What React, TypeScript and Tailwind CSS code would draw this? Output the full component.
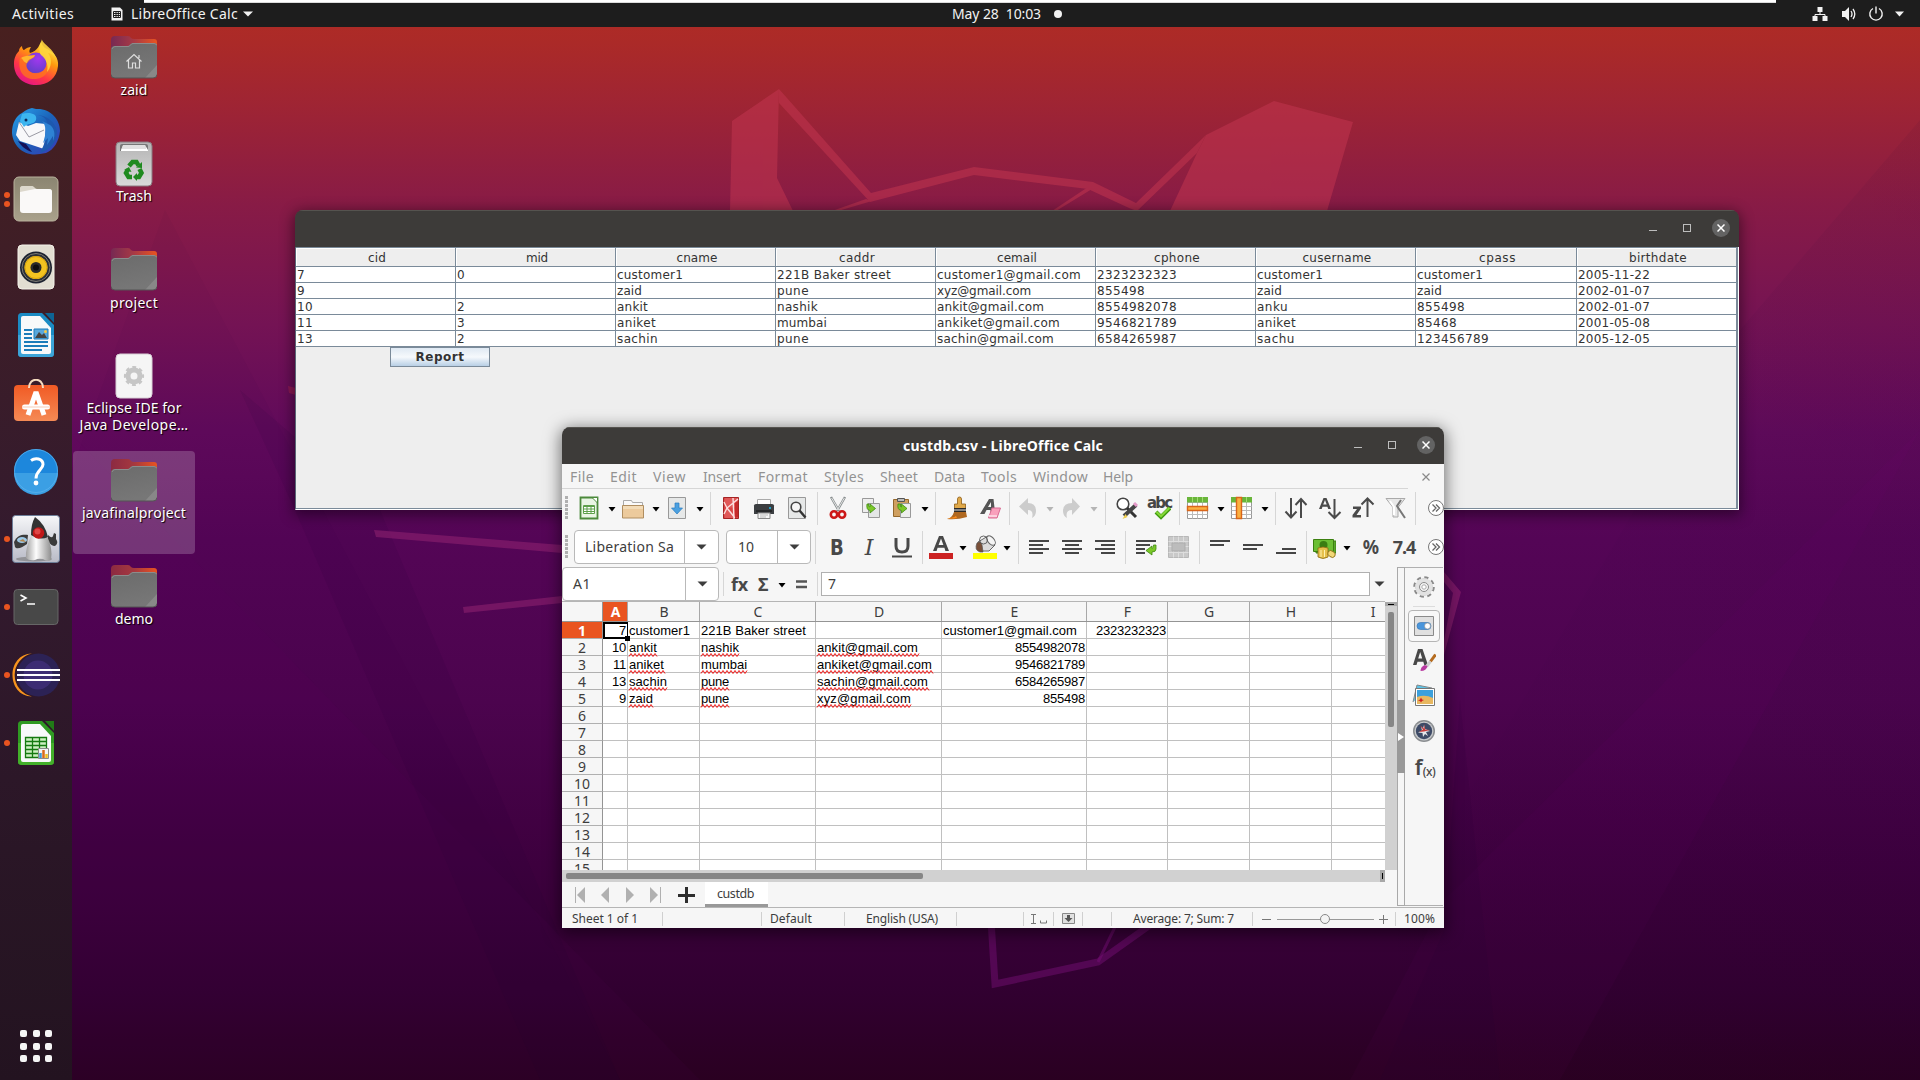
import { useLayoutEffect, useRef, useState } from "react";
import type { ReactNode } from "react";

/* Spreads a label over a fixed measure by adjusting its tracking. */
function Fit({ w, children, className = "" }: { w: number; children: string; className?: string }) {
  const ref = useRef<HTMLSpanElement>(null);
  const [ls, setLs] = useState(0);
  useLayoutEffect(() => {
    const el = ref.current;
    if (!el) return;
    el.style.letterSpacing = "0px";
    const natural = el.getBoundingClientRect().width;
    const next = (w - natural) / children.length;
    el.style.letterSpacing = `${next}px`;
    setLs(next);
  }, [w, children]);
  return (
    <span ref={ref} className={`inline-block shrink-0 whitespace-pre ${className}`} style={{ letterSpacing: `${ls}px` }}>
      {children}
    </span>
  );
}

const UI = "font-['Noto_Sans',sans-serif]";

/* ---------- Wallpaper ---------- */
function Wallpaper() {
  return (
    <svg className="absolute inset-0 h-[1080px] w-[1920px]" viewBox="0 0 1920 1080">
      <defs>
        <linearGradient id="sky" x1="0" y1="0" x2="0" y2="1">
          <stop offset="0" stopColor="#b12c24" />
          <stop offset="0.04" stopColor="#ab2a28" />
          <stop offset="0.1" stopColor="#9e2434" />
          <stop offset="0.19" stopColor="#881b46" />
          <stop offset="0.3" stopColor="#741354" />
          <stop offset="0.4" stopColor="#600a5b" />
          <stop offset="0.5" stopColor="#540556" />
          <stop offset="0.65" stopColor="#4c044e" />
          <stop offset="0.8" stopColor="#3d003e" />
          <stop offset="0.92" stopColor="#310030" />
          <stop offset="1" stopColor="#2a0021" />
        </linearGradient>
        <linearGradient id="fadeDark" x1="0" y1="0" x2="1" y2="0">
          <stop offset="0" stopColor="#1a0030" stopOpacity="0" />
          <stop offset="1" stopColor="#1a0030" stopOpacity="0.06" />
        </linearGradient>
      </defs>
      <rect width="1920" height="1080" fill="url(#sky)" />
      <path d="M72 435 L700 1080 L72 1080Z" fill="#700070" opacity="0.05" />
      <path d="M165 210 L560 960 L620 1080 L72 1080 L72 470Z" fill="#1a0030" opacity="0.03" />
      <path d="M240 390 L295 510 L540 1080 L620 1080 L380 510Z" fill="#1a0030" opacity="0.08" />
      <path d="M1920 120 L1740 330 L1300 1080 L1920 1080Z" fill="url(#fadeDark)" />
      <path d="M1920 430 L1444 900 L1350 1080 L1560 1080Z" fill="#a000a0" opacity="0.04" />
      <path d="M1460 700 L1444 930 L1380 1080 L1500 1080Z" fill="#1a0030" opacity="0.1" />
      <g fill="#c43650" opacity="0.52">
        <path d="M732 121 L779 89 L777 178 L793 211 L730 211Z" />
        <path d="M1206 135 L1274 101 L1353 122 L1327 211 L1170 211 L1197 153Z" />
        <path d="M779 89 L871 193 L974 167 L1093 182 L1136 203 L1206 135 L1197 153 L1137 211 L1129 208 L1088 189 L974 175 L870 202 L779 103Z" />
        <path d="M866 199 L832 211 L838 211 L872 201Z M1088 187 L1052 211 L1056 211 L1092 189Z" />
      </g>
      <path d="M288 386 l8 2 v7 l-7 -2z" fill="#a02050" opacity="0.6" />
      <g fill="#a02a78" opacity="0.45">
        <path d="M374 530 L562 545 L562 553 L376 537Z" />
        <path d="M463 607 L562 596 L562 603 L464 613Z" />
        <path d="M1444 572 L1461 592 L1444 655 L1444 640 L1453 593 L1444 582Z" />
      </g>
      <path d="M991 920 L995 984 L1098 962 L1160 918" fill="none" stroke="#7a0f7a" strokeWidth="7" opacity="0.45" />
      <path d="M1098 962 L1116 925" fill="none" stroke="#7a0f7a" strokeWidth="3" opacity="0.45" />
    </svg>
  );
}

/* ---------- Top bar ---------- */
function TopBar() {
  return (
    <header className={`relative flex h-[27px] w-full items-center bg-[#1d1d1d] text-[14px] leading-none text-[#f2f2f2] ${UI}`}>
      <div className="absolute top-0 left-[144px] h-[3px] w-[1632px] border-b border-[#dcdcdc] bg-white" />
      <Fit w={62} className="ml-3">Activities</Fit>
      <svg className="ml-[37px] h-[14px] w-[12px]" viewBox="0 0 12 14">
        <path d="M0.5 0.5h8.5l2.5 2.5v10.5h-11z" fill="#f2f2f2" />
        <path d="M2.5 4.5h7v6h-7zM2.5 6.5h7M2.5 8.5h7M5 4.5v6M7.3 4.5v6" fill="none" stroke="#1d1d1d" />
      </svg>
      <Fit w={107} className="ml-2">LibreOffice Calc</Fit>
      <svg className="ml-[5px] h-[6px] w-[10px]" viewBox="0 0 10 6"><path d="M0 0.5h10L5 5.5z" fill="#f2f2f2" /></svg>
      <Fit w={89} className="ml-[699px]">May 28  10:03</Fit>
      <span className="ml-[13px] h-2 w-2 rounded-full bg-[#f2f2f2]" />
      <svg className="ml-[750px] h-4 w-4" viewBox="0 0 16 16" fill="#f2f2f2">
        <path d="M5.5 1h5v5h-5zM0.500 10h5v5h-5zM10.500 10h5v5h-5z" />
        <path d="M8 5v4M3 11V8.500h10V11" fill="none" stroke="#f2f2f2" />
      </svg>
      <svg className="ml-[13px] h-4 w-4" viewBox="0 0 16 16" fill="#f2f2f2">
        <path d="M1 5h3l4-4v14l-4-4H1z" />
        <path d="M10 5q2 3 0 6M12 3q3.600 5 0 10" fill="none" stroke="#f2f2f2" strokeWidth="1.300" />
      </svg>
      <svg className="ml-[11px] h-4 w-4" viewBox="0 0 16 16" fill="none" stroke="#f2f2f2" strokeWidth="1.400">
        <path d="M5 2.500a6.200 6.200 0 1 0 6 0M8 0.500v7" />
      </svg>
      <svg className="ml-[11px] h-[6px] w-[9px]" viewBox="0 0 9 6"><path d="M0 0.500h9L4.500 5.500z" fill="#f2f2f2" /></svg>
    </header>
  );
}

/* ---------- Dock ---------- */
const Firefox = () => (
  <svg className="h-12 w-12" viewBox="0 0 48 48">
    <defs>
      <linearGradient id="ffb" x1="0.8" y1="0.1" x2="0.3" y2="1">
        <stop offset="0" stopColor="#fff44f" /><stop offset="0.35" stopColor="#ff980e" /><stop offset="0.7" stopColor="#ff3647" /><stop offset="1" stopColor="#e31587" />
      </linearGradient>
      <radialGradient id="ffg" cx="0.6" cy="0.3" r="0.8"><stop offset="0" stopColor="#a238ef" /><stop offset="1" stopColor="#5b3fc4" /></radialGradient>
    </defs>
    <path d="M30 0c-1 4 0 6 3 9 9 4 14 10 13 18C45 39 36 46 24 46S2 38 2 25c0-6 2-10 5-13 0-2 1-4 3-5 0 2 1 4 2 4 2-2 5-3 7-3-2 3-2 5-1 6 8-2 10-9 12-14z" fill="url(#ffb)" />
    <circle cx="24" cy="24" r="10.500" fill="url(#ffg)" />
    <path d="M8 19c5-2 10-2 15-3 0 3-3 3-6 6-5 4-2 12 6 12 9 0 13-6 12-13 4 8 0 18-11 19C12 41 5 32 8 19z" fill="#ff7a18" opacity="0.7" />
    <path d="M30 1c2 5 11 8 14 18-2-3-5-5-8-5 5 6 3 15-1 19 2-8-2-14-6-17-3-4-1-9 1-15z" fill="#ffd53d" opacity="0.9" />
    <path d="M9 19c4-3 10-2 14-3-1 4-7 3-8 8-3 0-4-4-6-5z" fill="#ffb52e" />
  </svg>
);
const Thunderbird = () => (
  <svg className="h-12 w-12" viewBox="0 0 48 48">
    <defs><linearGradient id="tb" x1="0" y1="0" x2="1" y2="1"><stop offset="0" stopColor="#2aa4ee" /><stop offset="0.5" stopColor="#1b62b8" /><stop offset="1" stopColor="#3a3ab8" /></linearGradient></defs>
    <path d="M20 1l4 1c14-1 24 10 24 22-1 10-6 19-14 22l-6 1C12 50 1 39 0 26 0 16 4 9 10 6c3-2 5-4 10-5z" fill="url(#tb)" />
    <path d="M6 34c3 5 8 9 14 11L14 37z" fill="#151057" />
    <path d="M4 28L7 15l9 4 8-3 10 1-2 25L8 34z" fill="#f8f8fa" />
    <path d="M7 15l10 15L32 23" fill="none" stroke="#9a9aa4" strokeWidth="1" />
    <path d="M10 7c6-2 16-1 14 6-2 5-9 3-12 7l-4-6z" fill="#3cb5ef" />
    <path d="M24 8c8 0 12 5 12 13-1 9-3 15-8 25 12-4 17-12 17-22-2-9-10-16-21-16z" fill="#1d58ae" />
    <path d="M30 14c5 5 4 14 1 22l5-5-1 7 6-9 0 5c3-7 1-13-3-16z" fill="#2e82d4" />
    <circle cx="14" cy="13" r="1.500" fill="#0c2a5c" />
  </svg>
);
const Files = () => (
  <svg className="h-12 w-12" viewBox="0 0 48 48">
    <defs><linearGradient id="fl" x1="0" y1="0" x2="0" y2="1"><stop offset="0" stopColor="#8b8571" /><stop offset="1" stopColor="#a9a18b" /></linearGradient></defs>
    <rect x="2" y="2" width="44" height="44" rx="5" fill="url(#fl)" stroke="#b9b29d" />
    <path d="M8 14c0-2 1-3 3-3h9c2 0 3 3 5 3h12c2 0 3 1 3 3v18H8z" fill="#dcd8cc" />
    <rect x="8" y="14" width="32" height="24" rx="3" fill="#faf9f8" />
    <path d="M8 17v-3c0-2 1-3 3-3h8c2 0 3 1.500 4 3z" fill="#dcd8cc" />
  </svg>
);
const Rhythmbox = () => (
  <svg className="h-12 w-12" viewBox="0 0 48 48">
    <rect x="6" y="2" width="36" height="44" rx="4" fill="#e2ded2" stroke="#f4f2ea" />
    <circle cx="24" cy="24.500" r="16" fill="#1c2230" /><circle cx="24" cy="24.500" r="14" fill="#2c3038" stroke="#7d7b74" />
    <circle cx="24" cy="24.500" r="11.500" fill="#f3c321" /><circle cx="24" cy="24.500" r="11" fill="none" stroke="#d9a40e" /><circle cx="24" cy="24.500" r="5.500" fill="#2b2b2b" />
    <circle cx="24" cy="24.500" r="3" fill="#0f0f0f" />
  </svg>
);
const Writer = () => (
  <svg className="h-12 w-12" viewBox="0 0 48 48">
    <path d="M10 2h20l12 12v28c0 3-1 4-4 4H10c-3 0-4-1-4-4V6c0-3 1-4 4-4z" fill="#1b8bc4" />
    <path d="M6 24h36v18c0 3-1 4-4 4H10c-3 0-4-1-4-4z" fill="#3ca4d8" />
    <path d="M33 2h9v10z" fill="#0e6495" />
    <path d="M11 5h17l11 12v24q0 2-2 2H11q-2 0-2-2V7q0-2 2-2z" fill="#f8f9fa" />
    <path d="M12 19h8M12 23h8M12 27h8M12 31h24M12 35h24M12 39h18" stroke="#1b7cba" strokeWidth="2" />
    <path d="M22 18h14v10H22z" fill="#5aa8dc" /><path d="M23 27l4-6 3 3 2-2 3 5z" fill="#444" /><circle cx="33.500" cy="20.500" r="1.500" fill="#f7c948" /><path d="M22 18h14v10H22z" fill="none" stroke="#1b7cba" />
  </svg>
);
const Software = () => (
  <svg className="h-12 w-12" viewBox="0 0 48 48">
    <defs><linearGradient id="sw" x1="0" y1="0" x2="0" y2="1"><stop offset="0" stopColor="#f15a24" /><stop offset="1" stopColor="#f58a55" /></linearGradient></defs>
    <rect x="2" y="6" width="44" height="36" rx="4" fill="url(#sw)" />
    <path d="M17 9c0-11 14-11 14 0" fill="none" stroke="#f6dcc0" strokeWidth="2" />
    <path d="M16 36l8-23 8 23" fill="none" stroke="#fff" strokeWidth="5" strokeLinejoin="bevel" />
    <rect x="10" y="25.500" width="28" height="5" rx="2.500" fill="#fff" /><path d="M10 28h28" stroke="#f4b899" strokeWidth="0.700" />
  </svg>
);
const Help = () => (
  <svg className="h-12 w-12" viewBox="0 0 48 48">
    <circle cx="24" cy="24" r="22" fill="#1d87dc" /><path d="M2 26a22 22 0 0 0 44 0z" fill="#3b9fe4" />
    <circle cx="24" cy="24" r="21.500" fill="none" stroke="#5fb4ee" strokeWidth="0.700" />
    <path d="M19 13.500c4-3 12-2.500 12 4 0 5-7 6-7 14" fill="none" stroke="#fff" strokeWidth="3" /><circle cx="24" cy="36" r="2.400" fill="#fff" />
  </svg>
);
const Duke = () => (
  <svg className="h-12 w-12" viewBox="0 0 48 48">
    <defs>
      <linearGradient id="dk" x1="0" y1="0" x2="0" y2="1"><stop offset="0" stopColor="#f6f7f9" /><stop offset="1" stopColor="#b8bac6" /></linearGradient>
      <linearGradient id="dkb" x1="0" y1="0" x2="1" y2="0"><stop offset="0" stopColor="#a0a0a0" /><stop offset="0.4" stopColor="#fdfdfd" /><stop offset="1" stopColor="#8d8d8d" /></linearGradient>
    </defs>
    <rect x="0.500" y="0.500" width="47" height="47" rx="3" fill="url(#dk)" stroke="#6d7f9a" />
    <ellipse cx="22" cy="44" rx="18" ry="2.500" fill="#777" opacity="0.6" />
    <path d="M2 27c3-7 9-8 14-7l-1 9c-4 3-10 6-12 3z" fill="#3c3c3c" /><ellipse cx="10" cy="25" rx="5" ry="3" fill="#9cc8e6" /><path d="M7 26l4-2 3 3z" fill="#b5884f" />
    <path d="M36 20q4 4 5 1l1-3 2 1v5q3 4-1 7-4 0-7-5z" fill="#3a3a3a" />
    <path d="M20 19q7 6 15 2 6 12 4 24-4 2-8-1-5-1-8 1-6 1-9-2-1-10 6-24z" fill="url(#dkb)" />
    <path d="M23 2q10 7 13 20-8 4-17-2 0-11 4-18z" fill="#333" />
    <circle cx="26.500" cy="18" r="5.800" fill="#c01818" /><circle cx="25.500" cy="16.500" r="3" fill="#ee5a5a" opacity="0.7" />
  </svg>
);
const Terminal = () => (
  <svg className="h-12 w-12" viewBox="0 0 48 48">
    <rect x="2" y="6.500" width="44" height="35" rx="3.500" fill="#484848" stroke="#666" />
    <path d="M8.500 12l5.500 3-5.500 3" fill="none" stroke="#fff" strokeWidth="1.600" /><path d="M15 21h8" stroke="#fff" strokeWidth="1.500" />
  </svg>
);
const Eclipse = () => (
  <svg className="h-12 w-12" viewBox="0 0 48 48">
    <path d="M20 2.500A22 22 0 0 0 20 45.500C-6 45-6 3 20 2.500z" fill="#f7941e" />
    <circle cx="26.500" cy="24" r="21.500" fill="#2c2255" /><circle cx="26" cy="24" r="14.500" fill="#41307b" opacity="0.8" />
    <path d="M5 19h43M5 24h43M5 29h43" stroke="#fff" strokeWidth="2.200" />
  </svg>
);
const CalcIcon = () => (
  <svg className="h-12 w-12" viewBox="0 0 48 48">
    <path d="M10 2h20l12 12v28c0 3-1 4-4 4H10c-3 0-4-1-4-4V6c0-3 1-4 4-4z" fill="#2f9a22" />
    <path d="M6 24h36v18c0 3-1 4-4 4H10c-3 0-4-1-4-4z" fill="#43b02a" />
    <path d="M33 2h9v10z" fill="#217a17" />
    <path d="M11 5h17l11 12v24q0 2-2 2H11q-2 0-2-2V7q0-2 2-2z" fill="#f8f9fa" />
    <path d="M13.500 18.500h21v20h-21z" fill="#ccf0c0" />
    <path d="M13.500 18.500h21v20h-21zM13.500 22.500h21M13.500 26.500h21M13.500 30.500h21M13.500 34.500h21M20.500 18.500v20M27.500 18.500v20" fill="none" stroke="#157a10" strokeWidth="1.300" />
    <path d="M26.500 29.500h10v10h-10z" fill="#f5f5f5" stroke="#8a8a8a" /><path d="M28.500 39v-5" stroke="#3a9ad4" strokeWidth="2.500" /><path d="M31.500 39v-8" stroke="#d9691c" strokeWidth="2.500" /><path d="M34.500 39v-4" stroke="#f0c020" strokeWidth="2.500" />
  </svg>
);

function Dock() {
  const apps: { icon: ReactNode; dots: number }[] = [
    { icon: <Firefox />, dots: 0 }, { icon: <Thunderbird />, dots: 0 }, { icon: <Files />, dots: 2 }, { icon: <Rhythmbox />, dots: 0 },
    { icon: <Writer />, dots: 0 }, { icon: <Software />, dots: 0 }, { icon: <Help />, dots: 0 }, { icon: <Duke />, dots: 1 },
    { icon: <Terminal />, dots: 1 }, { icon: <Eclipse />, dots: 1 }, { icon: <CalcIcon />, dots: 1 },
  ];
  return (
    <nav className="flex w-[72px] shrink-0 flex-col bg-gradient-to-b from-[#48201f] via-[#331a2e] to-[#231320] pt-[2px]">
      {apps.map((a, i) => (
        <div key={i} className="flex h-[68px] items-center">
          <div className="flex w-3 flex-col items-end gap-[3px] pr-[2px]">
            {Array.from({ length: a.dots }).map((_, d) => <span key={d} className="h-[6px] w-[6px] rounded-full bg-[#e95420]" />)}
          </div>
          {a.icon}
        </div>
      ))}
      <div className="mt-auto mb-[18px] ml-5 grid w-8 grid-cols-3 gap-[5.500px]">
        {Array.from({ length: 9 }).map((_, i) => <span key={i} className="h-[7px] w-[7px] rounded-[2px] bg-[#f5f5f5]" />)}
      </div>
    </nav>
  );
}

/* ---------- Desktop icons ---------- */
const Folder = ({ home = false, warm = false }: { home?: boolean; warm?: boolean }) => (
  <svg className="h-[44px] w-[46px]" viewBox="0 0 46 44">
    <defs>
      <linearGradient id="fb1" x1="0" y1="0" x2="1" y2="0"><stop offset="0" stopColor="#772953" /><stop offset="0.5" stopColor="#a83a45" /><stop offset="1" stopColor="#e95420" /></linearGradient>
      <linearGradient id="fb2" x1="0" y1="0" x2="1" y2="0"><stop offset="0" stopColor="#8c2a42" /><stop offset="0.5" stopColor="#a5383f" /><stop offset="1" stopColor="#e95420" /></linearGradient>
      <linearGradient id="ff" x1="0" y1="0" x2="0.300" y2="1"><stop offset="0" stopColor="#6b6b6b" /><stop offset="1" stopColor="#777" /></linearGradient>
    </defs>
    <path d="M0 4q0-4 4-4h13q2 0 3 2 1 1 3 1h20q3 0 3 3v16H0z" fill={warm ? "url(#fb2)" : "url(#fb1)"} />
    <path d="M0 14q0-4 4-4h13q1 0 2-1.500T22 7h21q3 0 3 3v28q0 4-4 4H4q-4 0-4-4z" fill="url(#ff)" />
    <path d="M1 13q1-2.500 3-2.500h13q1.500 0 2.500-1.500T22 7.500h21q2 0 3 2" fill="none" stroke="#999" strokeWidth="0.700" />
    <path d="M46 29v9q0 4-4 4h-8z" fill="#888" /><path d="M0 38.500q0 3.500 4 3.500h38q4 0 4-3.500" fill="none" stroke="#555" />
    {home && <path d="M15.500 25.500l7.500-7 7.500 7M17.500 24v8h4v-5h3v5h4v-8M28 22v-3" fill="none" stroke="#dedede" strokeWidth="1.200" />}
  </svg>
);
const Trash = () => (
  <svg className="h-[46px] w-[38px]" viewBox="0 0 38 46">
    <defs><linearGradient id="tr" x1="0" y1="0" x2="0" y2="1"><stop offset="0" stopColor="#b4b4b4" /><stop offset="1" stopColor="#dadada" /></linearGradient></defs>
    <rect x="1" y="1" width="36" height="44" rx="4" fill="url(#tr)" stroke="#8a7a80" />
    <path d="M5 10V5q0-2 2-2h24q2 0 2 2v5z" fill="#777" /><path d="M6 9l2-5h22l3 5v1H6z" fill="#fff" /><path d="M8 5h23M7 7h24" stroke="#aaa" strokeWidth="0.700" />
    <g fill="none" stroke="#1f8a1f" strokeWidth="4.500"><path d="M14 25l3.500-4h4l2 3.500M24.500 28l2 4-2.500 4h-3.500M17 36h-3.500l-2.500-4 2-3.500" /></g>
    <path d="M21 26.500l6 0.500v-6zM22 32v8l-4-4zM9 29l5-3 2.500 5z" fill="#1f8a1f" />
  </svg>
);
const Launcher = () => (
  <svg className="h-[46px] w-[38px]" viewBox="0 0 38 46">
    <rect x="1" y="1" width="36" height="44" rx="4" fill="#f5f5f5" stroke="#d8d0d6" />
    <circle cx="19" cy="23" r="6" fill="none" stroke="#c6c6c6" strokeWidth="5" />
    <circle cx="19" cy="23" r="8.600" fill="none" stroke="#c6c6c6" strokeWidth="3" strokeDasharray="3.700 3.050" strokeDashoffset="1.850" />
  </svg>
);

function DesktopIcons() {
  const items: { icon: ReactNode; lines: [string, number][]; sel?: boolean; pad: string; box: string }[] = [
    { icon: <Folder home />, lines: [["zaid", 27]], pad: "pt-[8px]", box: "h-[45px]" },
    { icon: <Trash />, lines: [["Trash", 36]], pad: "pt-[7px]", box: "h-[46px]" },
    { icon: <Folder />, lines: [["project", 48]], pad: "pt-[8px]", box: "h-[46px]" },
    { icon: <Launcher />, lines: [["Eclipse IDE for", 95], ["Java Develope…", 109]], pad: "pt-[8px]", box: "h-[46px]" },
    { icon: <Folder warm />, lines: [["javafinalproject", 104]], sel: true, pad: "pt-[8px]", box: "h-[45px]" },
    { icon: <Folder warm />, lines: [["demo", 38]], pad: "pt-[8px]", box: "h-[45px]" },
  ];
  return (
    <div className={`flex flex-col gap-[2.750px] pt-[1px] pl-px text-[14px] leading-[17px] text-white ${UI}`}>
      {items.map((it, i) => (
        <div key={i} className={`flex h-[103px] w-[122px] flex-col items-center rounded-[4px] ${it.pad} ${it.sel ? "bg-white/20" : ""}`}>
          <div className={`flex items-start ${it.box}`}>{it.icon}</div>
          {it.lines.map(([t, w]) => (
            <Fit key={t} w={w} className="[text-shadow:1px_1px_1px_#000]">{t}</Fit>
          ))}
        </div>
      ))}
    </div>
  );
}

/* ---------- Window chrome ---------- */
function WindowButtons() {
  return (
    <div className="mb-[2px] flex items-center text-[#c8c8c8]">
      <span className="mt-[5px] h-px w-2 bg-[#bdbdbd]" />
      <span className="ml-[26px] h-2 w-2 border border-[#bdbdbd]" />
      <span className="ml-[21px] flex h-[18px] w-[18px] items-center justify-center rounded-full bg-[#636363]">
        <svg className="h-2 w-2" viewBox="0 0 8 8"><path d="M0.500 0.500l7 7M7.500 0.500l-7 7" stroke="#fff" strokeWidth="1.500" /></svg>
      </span>
    </div>
  );
}

/* ---------- Customer table window ---------- */
const HEADS: [string, number][] = [["cid", 18], ["mid", 22], ["cname", 41], ["caddr", 36], ["cemail", 40], ["cphone", 46], ["cusername", 69], ["cpass", 37], ["birthdate", 58]];
const ROWS: [string, number][][] = [
  [["7", 8], ["0", 8], ["customer1", 66], ["221B Baker street", 114], ["customer1@gmail.com", 144], ["2323232323", 80], ["customer1", 66], ["customer1", 66], ["2005-11-22", 72]],
  [["9", 8], ["", 0], ["zaid", 25], ["pune", 32], ["xyz@gmail.com", 94], ["855498", 48], ["zaid", 25], ["zaid", 25], ["2002-01-07", 72]],
  [["10", 16], ["2", 8], ["ankit", 31], ["nashik", 41], ["ankit@gmail.com", 107], ["8554982078", 80], ["anku", 31], ["855498", 48], ["2002-01-07", 72]],
  [["11", 16], ["3", 8], ["aniket", 39], ["mumbai", 50], ["ankiket@gmail.com", 123], ["9546821789", 80], ["aniket", 39], ["85468", 40], ["2001-05-08", 72]],
  [["13", 16], ["2", 8], ["sachin", 41], ["pune", 32], ["sachin@gmail.com", 117], ["6584265987", 80], ["sachu", 38], ["123456789", 72], ["2005-12-05", 72]],
];

function TableWindow() {
  return (
    <section className="absolute top-[210px] left-[295px] flex h-[300px] w-[1444px] flex-col overflow-hidden rounded-t-[8px] font-['DejaVu_Sans',sans-serif] text-[12px] leading-none text-[#333] shadow-[0_3px_14px_2px_rgba(0,0,0,0.45)]">
      <div className="flex h-[37px] shrink-0 items-center justify-end border-t border-[#55534f] bg-[#3d3b39] pr-[9px]"><WindowButtons /></div>
      <div className="flex-1 border-r border-b border-l border-r-white border-b-white border-l-[#5a6675] bg-white">
        <div className="h-full w-[1442px] border-r-2 border-b border-[#7a8a99] bg-[#eee]">
          <div className="grid grid-cols-[repeat(7,160px)_161px_160px]">
            {HEADS.map(([h, w]) => (
              <div key={h} className="flex h-5 items-center justify-center border-t border-r border-b border-[#7a8a99] bg-[#eee] pt-[2px] pl-[3px] shadow-[inset_1px_1px_0_#fff]"><Fit w={w}>{h}</Fit></div>
            ))}
            {ROWS.flatMap((r, i) => r.map(([t, w], j) => (
              <div key={`${i}-${j}`} className="flex h-4 items-center border-r border-b border-[#7a8a99] bg-white pl-px">{t && <Fit w={w}>{t}</Fit>}</div>
            )))}
          </div>
          <button className="ml-[94px] flex h-5 w-[100px] items-center justify-center border border-[#7a8a99] bg-gradient-to-b from-[#dfe9f3] via-[#f6f9fc] to-[#b8cfe5] font-bold"><Fit w={49}>Report</Fit></button>
        </div>
      </div>
    </section>
  );
}

/* ---------- Calc window ---------- */
const I = ({ children, cls = "" }: { children: ReactNode; cls?: string }) => (
  <svg className={`h-6 w-6 shrink-0 ${cls}`} viewBox="0 0 24 24">{children}</svg>
);
const Sep = ({ cls }: { cls: string }) => <span className={`h-[33px] w-px shrink-0 bg-[#d6d6d6] ${cls}`} />;
const Arr = ({ cls, off = false }: { cls: string; off?: boolean }) => (
  <svg className={`mt-[3px] h-[5px] w-3 shrink-0 ${cls}`} viewBox="0 0 12 5"><path d="M2.500 0h7L6 4.500z" fill={off ? "#b5b5b5" : "#000"} /></svg>
);
const Grip = () => (
  <svg className="h-6 w-2 shrink-0" viewBox="0 0 8 24"><path d="M4.500 0v24" stroke="#b0b0b0" strokeWidth="3" strokeDasharray="3 1" /></svg>
);
const More = ({ cls }: { cls: string }) => (
  <svg className={`h-[18px] w-4 shrink-0 ${cls}`} viewBox="0 0 16 18"><circle cx="8" cy="9" r="7.500" fill="#fff" stroke="#777" /><path d="M4.500 5.500l3.500 3.500-3.500 3.500M8 5.500l3.500 3.500L8 12.500" fill="none" stroke="#666" strokeWidth="1.300" /></svg>
);
const PageShape = () => <path d="M3.500 1.500h17v21h-17z" fill="#e6e8e8" stroke="#999" />;
const GreenArrow = ({ d }: { d: string }) => <path d={d} fill="#7bc828" stroke="#3f8a10" strokeWidth="0.800" />;

function ToolbarOne() {
  return (
    <div className="flex h-[38px] shrink-0 items-center overflow-hidden">
      <Grip />
      <I cls="ml-[7px]"><path d="M3.500 1.500h17v21h-17z" fill="#e9f5e4" stroke="#4c8a3c" strokeWidth="1.800" /><path d="M15 1.500h5.500V7z" fill="#fff" stroke="#4c8a3c" /><path d="M6.500 9.500h11v8h-11z" fill="#fff" stroke="#5da04a" /><path d="M6.500 10.500h11M6.500 13h11M6.500 15.500h11M10 9.500v8M14 9.500v8" stroke="#5da04a" /></I>
      <Arr cls="ml-[5px]" />
      <I cls="ml-[3px]"><path d="M2.500 9V4.500h8l1 2h10V9" fill="#fafafa" stroke="#aaa" /><path d="M1.500 9.500h21v12.500h-21z" fill="#ecca9c" stroke="#b08e60" /><path d="M2 10h20v3H2z" fill="#f3dcb8" /></I>
      <Arr cls="ml-[5px]" />
      <I cls="ml-[3px]"><PageShape /><path d="M10 7h4v5h3.500L12 18l-5.500-6H10z" fill="#4aa0e0" stroke="#2a7cc0" strokeWidth="0.700" /></I>
      <Arr cls="ml-[5px]" />
      <Sep cls="ml-1" />
      <I cls="ml-2"><path d="M4.500 1.500h15v21h-15z" fill="#d94444" stroke="#a52424" /><path d="M6 2h13v9L9 12l10 10H6l-1-5 4-5-4-6z" fill="#e05858" /><path d="M19 3L8 12l8 10M8 12l-3-6M8 12l-3 6M14 2l1 21" fill="none" stroke="#fbe0e0" strokeWidth="1.400" /><path d="M19 5v16l-3 1V7z" fill="#c62a2a" /></I>
      <I cls="ml-[9px]"><path d="M5.500 3.500h13V9h-13z" fill="#fff" stroke="#aaa" /><path d="M2 9.500q0-1.500 2-1.500h16q2 0 2 1.500V18H2z" fill="#3c3f42" /><path d="M6 17h12v5.500H6z" fill="#f6f6f6" stroke="#888" /><path d="M8 19h8M8 21h6" stroke="#bbb" /><path d="M4 15h16" stroke="#111" /><circle cx="18" cy="12" r="1" fill="#20c0f0" /></I>
      <I cls="ml-[9px]"><PageShape /><circle cx="11" cy="11" r="4.800" fill="#f6f6f6" stroke="#444" strokeWidth="1.600" /><path d="M14.500 14.500l6 7" stroke="#333" strokeWidth="2.500" /></I>
      <Sep cls="ml-2" />
      <I cls="ml-2"><path d="M5 1l8 14M19 1l-8 14" stroke="#8a8f90" strokeWidth="2.400" /><path d="M5.600 2l7 12M18.400 2l-7 12" stroke="#e4e6e6" /><circle cx="8" cy="18.500" r="3.200" fill="none" stroke="#cc1818" strokeWidth="2.600" /><circle cx="16" cy="18.500" r="3.200" fill="none" stroke="#cc1818" strokeWidth="2.600" /></I>
      <I cls="ml-[9px]"><path d="M3.500 2.500h11v14h-11z" fill="#eee" stroke="#999" /><path d="M9.500 7.500h11v14h-11z" fill="#e4e6e6" stroke="#999" /><GreenArrow d="M8 8q-1 6 3 6.500V17l5.500-4.500L11 8v3q-2 0-1-3z" /></I>
      <I cls="ml-[9px]"><path d="M1.500 3.500h15v17h-15z" fill="#d0a060" stroke="#94682c" /><path d="M5.500 2.500h7v3h-7z" fill="#bbb" stroke="#555" /><path d="M8.500 7.500h10v14h-10z" fill="#eee" stroke="#999" /><GreenArrow d="M6 8q-1 6 3.500 6.500V17l5.500-4.500L9.500 8v3q-2 0-1-3z" /></I>
      <Arr cls="ml-[3px]" />
      <Sep cls="ml-1" />
      <I cls="ml-[9px]"><path d="M12.500 8V3q0-2 2-2t2 2v5h4v5h-11V8z" fill="#e0a94a" stroke="#8f5e18" strokeWidth="0.800" /><path d="M9 12h12v4H9z" fill="#2a2a2a" /><path d="M9 14h12" stroke="#ddd" /><path d="M9 16h12l1 5q-10 3-20 2 5-1 7-7z" fill="#b06820" /><path d="M2 22q6 0 9-2l1 2q-6 1-10 0z" fill="#ff8c1a" /></I>
      <I cls="ml-[9px]"><path d="M2 18L11 3h4.500l1.500 13h-4.500v-2H8.500l-2 4zM10 11h3V6z" fill="#555" fillRule="evenodd" /><path d="M14 12h8.500l-3.500 10H10.500z" fill="#f9a0bc" stroke="#d86a92" strokeWidth="1" /><path d="M11 20h8" stroke="#fcd0de" strokeWidth="2" /></I>
      <Sep cls="ml-[7px]" />
      <I cls="ml-[6px]"><path d="M3 10.500l9-8.500v5q8 0 8 8 0 5-4 7 2-8-4-8v5z" fill="#cccccc" /></I>
      <Arr cls="ml-1" off />
      <I cls="ml-1"><path d="M20 10.500L12 2v5q-9 0-9 8 0 5 4 7-2-8 5-8v5z" fill="#cccccc" /></I>
      <Arr cls="ml-1" off />
      <Sep cls="ml-[5px]" />
      <I cls="ml-[9px]"><circle cx="8" cy="8" r="5.800" fill="#fff" stroke="#444" strokeWidth="1.600" /><path d="M12 12l9 9" stroke="#333" strokeWidth="3" /><path d="M21 9L9 20" stroke="#444" strokeWidth="4" /><path d="M10.500 18l-3 5 5-2z" fill="#f0d050" /><path d="M19 7l3 3" stroke="#e49ac8" strokeWidth="3" /></I>
      <span className="relative ml-2 h-6 w-6 shrink-0">
        <span className="absolute top-0 left-0 font-['DejaVu_Sans',sans-serif] text-[15px] leading-none font-bold tracking-[-1.800px] text-[#454545]">abc</span>
        <svg className="absolute inset-0 h-6 w-6" viewBox="0 0 24 24"><path d="M9 16l5 5 9-9" fill="none" stroke="#3f9a10" strokeWidth="4" /><path d="M9.500 16l4.500 4.300 8.500-8.500" fill="none" stroke="#86d838" strokeWidth="2.200" /></svg>
      </span>
      <Sep cls="ml-2" />
      <I cls="ml-[6px]"><path d="M1.500 1.500h20v21h-20z" fill="#fff" stroke="#999" /><path d="M1.500 6.500h20M1.500 18.500h20M6.500 1.500v21M11.500 1.500v21M16.500 1.500v21" stroke="#bbb" /><path d="M1 1h21v5.500H1z" fill="#69b53a" /><path d="M6.500 1v5M11.500 1v5M16.500 1v5" stroke="#9fdc70" /><path d="M1.500 10.500h20v4h-20z" fill="#fbb040" stroke="#d9661a" strokeWidth="1.400" /></I>
      <Arr cls="ml-[5px]" />
      <I cls="ml-[3px]"><path d="M1.500 1.500h20v21h-20z" fill="#fff" stroke="#999" /><path d="M1.500 10.500h20M1.500 14.500h20M1.500 18.500h20M6.500 1.500v21M16.500 1.500v21" stroke="#bbb" /><path d="M1 1h21v5.500H1z" fill="#69b53a" /><path d="M6.500 1v5M16.500 1v5" stroke="#9fdc70" /><path d="M6.500 1.500h5v21h-5z" fill="#fbb040" stroke="#d9661a" strokeWidth="1.400" /></I>
      <Arr cls="ml-[5px]" />
      <Sep cls="ml-1" />
      <I cls="ml-2"><path d="M7 2v18M1.500 15.500L7 21.500l5.500-6M17 22V4M11.500 9L17 3l5.500 6" fill="none" stroke="#4a4a4a" strokeWidth="2" /></I>
      <I cls="ml-[10px]"><path d="M1 13L5.500 2h3L13 13h-2.800l-.8-2.200H4.500L3.700 13zM5.200 8.500h3.500L7 4z" fill="#4a4a4a" fillRule="evenodd" /><path d="M16.500 3v18M10.500 16l6 6 6-6" fill="none" stroke="#4a4a4a" strokeWidth="2" /></I>
      <I cls="ml-[9px]"><path d="M2 10.500h8v2l-4.500 6.500H10v2.500H1.500v-2.500L6 13H2z" fill="#4a4a4a" /><path d="M16.500 21V3M10.500 8.500l6-6 6 6" fill="none" stroke="#4a4a4a" strokeWidth="2" /></I>
      <I cls="ml-[9px]"><path d="M2 2.500h19l-7 9V21H9v-9.500z" fill="#e8e8e8" stroke="#aaa" /><path d="M6 5l4 6v8" fill="none" stroke="#fff" strokeWidth="2" /><path d="M17 4l-4 6 8 12" fill="none" stroke="#777" strokeWidth="2" /></I>
      <Sep cls="ml-[7px]" />
      <More cls="ml-3" />
    </div>
  );
}

const Drop = () => <svg className="h-[6px] w-[11px]" viewBox="0 0 11 6"><path d="M0.500 0.500h10L5.500 5.500z" fill="#3d3d3d" /></svg>;
const Bars = ({ d, cls }: { d: string; cls: string }) => <I cls={cls}><path d={d} stroke="#454545" strokeWidth="2" /></I>;

function ToolbarTwo() {
  return (
    <div className="flex h-10 shrink-0 items-center overflow-hidden text-[#3d3d3d]">
      <Grip />
      <div className="ml-1 flex h-[34px] w-[145px] shrink-0 items-center rounded-[4px] border border-[#b9b9b9] bg-white">
        <Fit w={89} className="ml-[10px]">Liberation Sa</Fit>
        <span className="ml-[10px] flex h-full flex-1 items-center justify-center border-l border-[#b9b9b9]"><Drop /></span>
      </div>
      <div className="ml-[7px] flex h-[34px] w-[85px] shrink-0 items-center rounded-[4px] border border-[#b9b9b9] bg-white">
        <Fit w={16} className="ml-[11px]">10</Fit>
        <span className="ml-[23px] flex h-full flex-1 items-center justify-center border-l border-[#b9b9b9]"><Drop /></span>
      </div>
      <Sep cls="ml-1" />
      <span className="ml-[9px] w-6 shrink-0 text-center font-['DejaVu_Sans',sans-serif] text-[22px] leading-none font-bold text-[#484848] [transform:translateY(1px)_scaleX(.82)]">B</span>
      <span className="ml-[8px] w-6 shrink-0 text-center font-['DejaVu_Serif',serif] text-[22px] leading-none text-[#484848] italic [transform:translateY(1px)]">I</span>
      <svg className="ml-[9px] h-6 w-6 shrink-0" viewBox="0 0 24 24"><path d="M6 3v8q0 6 6 6t6-6V3" fill="none" stroke="#484848" strokeWidth="3" /><path d="M2 21.500h20" stroke="#484848" strokeWidth="2" /></svg>
      <Sep cls="ml-2" />
      <I cls="ml-[6px]"><path d="M4 16L10 1h4l6 15h-3.600l-1-3.200H8.600L7.600 16zM9.600 10h4.800L12 3.500z" fill="#484848" fillRule="evenodd" /><path d="M0 18h24V24H0z" fill="#cc2222" /></I>
      <Arr cls="ml-1" />
      <I cls="ml-1"><path d="M5 7L15 1l7 9-6 6-8 0z" fill="#dcdcdc" stroke="#666" /><path d="M4 8q4-3 5 2l1 7H7q-6-2-3-9z" fill="#7a5038" stroke="#555" strokeWidth="0.700" /><ellipse cx="18" cy="5.500" rx="5.500" ry="3.200" fill="#f4f4f4" stroke="#666" transform="rotate(50 18 5.500)" /><circle cx="10.500" cy="5" r="4" fill="none" stroke="#555" strokeWidth="0.900" /><path d="M0 18h24V24H0z" fill="#ffff00" /></I>
      <Arr cls="ml-1" />
      <Sep cls="ml-[5px]" />
      <Bars cls="ml-2" d="M2 6h20M2 10h14M2 14h20M2 18h14" />
      <Bars cls="ml-[9px]" d="M2 6h20M5 10h14M2 14h20M5 18h14" />
      <Bars cls="ml-[9px]" d="M2 6h20M8 10h14M2 14h20M8 18h14" />
      <Sep cls="ml-2" />
      <I cls="ml-2"><path d="M2 6h20M2 10h14M2 14h9M2 18h9" stroke="#454545" strokeWidth="2" /><GreenArrow d="M22 10v4q0 3-4 3v3l-6-4.500 6-4.500v2.500q1.500 0 1.500-3.500z" /></I>
      <I cls="ml-[9px]"><path d="M1.500 1.500h20v21h-20z" fill="#c9c9c9" stroke="#b8b8b8" /><path d="M1.500 6.500h20M1.500 11.500h20M1.500 17.500h20M6.500 1.500v21M11.500 1.500v21M16.500 1.500v21" stroke="#dedede" /><path d="M5 8h13v8H5z" fill="#bcbcbc" stroke="#adadad" /></I>
      <Sep cls="ml-2" />
      <Bars cls="ml-2" d="M2 6h20M2 10h14" />
      <Bars cls="ml-[9px]" d="M2 10h20M2 14h14" />
      <Bars cls="ml-[9px]" d="M8 14h14M2 18h20" />
      <Sep cls="ml-2" />
      <I cls="ml-[5px]"><path d="M4 6h20v12H4z" fill="#5aa82c" stroke="#3c8010" /><path d="M1.500 4.500h20v12h-20z" fill="#6cbf34" stroke="#3c8010" /><circle cx="11.500" cy="10" r="4" fill="#3a7d12" /><path d="M6 13q5-2 10 0v9q-5 3-10 0z" fill="#e6c04c" stroke="#8a6a10" strokeWidth="0.800" /><path d="M9 15v7M12.500 15v7" stroke="#fff2b0" /><ellipse cx="19.500" cy="19" rx="4" ry="3" fill="#f2d878" stroke="#8a6a10" strokeWidth="0.800" transform="rotate(35 19.500 19)" /></I>
      <Arr cls="ml-[5px]" />
      <span className="ml-[6px] w-6 shrink-0 text-center text-[19px] leading-none font-bold text-[#484848] [transform:scaleX(.95)]">%</span>
      <span className="ml-[9px] w-6 shrink-0 text-center text-[18px] leading-none font-bold tracking-[-1px] text-[#484848]">7.4</span>
      <More cls="ml-[12px]" />
    </div>
  );
}

const COLS = [
  { n: "A", c: "w-[25px]" }, { n: "B", c: "w-[72px]" }, { n: "C", c: "w-[116px]" }, { n: "D", c: "w-[126px]" }, { n: "E", c: "w-[145px]" },
  { n: "F", c: "w-[81px]" }, { n: "G", c: "w-[82px]" }, { n: "H", c: "w-[82px]" }, { n: "I", c: "w-[82px]" },
];
type Cell = { t: string; w: number; r?: boolean; z?: boolean };
const DATA: Record<string, Cell>[] = [
  { A: { t: "7", w: 7, r: true }, B: { t: "customer1", w: 61 }, C: { t: "221B Baker street", w: 105 }, E: { t: "customer1@gmail.com", w: 134 }, F: { t: "2323232323", w: 70, r: true } },
  { A: { t: "10", w: 14, r: true }, B: { t: "ankit", w: 28, z: true }, C: { t: "nashik", w: 38, z: true }, D: { t: "ankit@gmail.com", w: 101, z: true }, E: { t: "8554982078", w: 70, r: true } },
  { A: { t: "11", w: 13, r: true }, B: { t: "aniket", w: 35, z: true }, C: { t: "mumbai", w: 46, z: true }, D: { t: "ankiket@gmail.com", w: 115, z: true }, E: { t: "9546821789", w: 70, r: true } },
  { A: { t: "13", w: 14, r: true }, B: { t: "sachin", w: 38, z: true }, C: { t: "pune", w: 28, z: true }, D: { t: "sachin@gmail.com", w: 111, z: true }, E: { t: "6584265987", w: 70, r: true } },
  { A: { t: "9", w: 7, r: true }, B: { t: "zaid", w: 24, z: true }, C: { t: "pune", w: 28, z: true }, D: { t: "xyz@gmail.com", w: 94, z: true }, E: { t: "855498", w: 42, r: true } },
];

function Squiggle({ w }: { w: number }) {
  const n = Math.ceil(w / 2);
  const d = "M0 3.5" + Array.from({ length: n }, (_, i) => `L${(i + 1) * 2} ${i % 2 ? 3.5 : 0.5}`).join("");
  return <svg className="absolute bottom-[-1px] left-0 h-[4px] w-full overflow-visible"><path d={d} fill="none" stroke="#f01818" strokeWidth="1" /></svg>;
}

function Sheet() {
  return (
    <div className="relative h-[269px] w-[823px] shrink-0 overflow-hidden border-t border-[#b5b5b5] bg-white">
      <div className="flex h-5 w-[900px] border-b border-[#949494] bg-[#f6f6f6] text-[14px] leading-none text-[#3d3d3d]">
        <span className="w-[41px] shrink-0 border-r border-[#949494]" />
        {COLS.map((c) => (
          <span key={c.n} className={`flex shrink-0 items-center justify-center border-r border-[#a8a8a8] pl-px ${c.c} ${c.n === "A" ? "bg-[#e95420] font-bold text-white" : ""}`}>{c.n}</span>
        ))}
      </div>
      {Array.from({ length: 15 }, (_, r) => (
        <div key={r} className="flex h-[17px] w-[900px]">
          <span className={`flex w-[41px] shrink-0 items-center justify-center border-r border-b border-r-[#949494] border-b-[#b0b0b0] pt-[2px] text-[14px] leading-none ${r === 0 ? "bg-[#e95420] font-bold text-white" : "bg-[#f6f6f6] text-[#3d3d3d]"}`}>{r + 1}</span>
          {COLS.map((c) => {
            const cell = DATA[r]?.[c.n];
            return (
              <span key={c.n} className={`flex shrink-0 items-center border-r border-b border-[#c0c0c0] px-px pt-[2px] font-['Liberation_Sans',sans-serif] text-[13px] leading-[16px] text-black ${c.c} ${cell?.r ? "justify-end" : ""}`}>
                {cell && <span className="relative flex"><Fit w={cell.w}>{cell.t}</Fit>{cell.z && <Squiggle w={cell.w} />}</span>}
              </span>
            );
          })}
        </div>
      ))}
      <span className="absolute top-5 left-[41px] h-[17px] w-[25px] border-2 border-r-0 border-black border-r-black" />
      <span className="absolute top-5 left-[65px] h-[17px] w-px bg-black" />
      <span className="absolute top-[34px] left-[63px] h-[5px] w-[5px] bg-black" />
    </div>
  );
}

function SideBar() {
  return (
    <div className="flex h-[340px] w-[46px] shrink-0">
      <div className="flex h-[339px] w-2 flex-col border border-[#a9a9a9] bg-[#f6f6f6]">
        <span className="-mx-px mt-[132px] flex h-[73px] items-center bg-[#999]"><svg className="ml-px h-2 w-[6px]" viewBox="0 0 6 8"><path d="M0 0l6 4-6 4z" fill="#fff" /></svg></span>
      </div>
      <div className="flex h-[339px] flex-1 flex-col items-center border-t border-b border-[#b0b0b0]">
        <I cls="mt-[7px]"><circle cx="12" cy="12" r="8" fill="#e2e2e2" stroke="#8a8a8a" /><circle cx="12" cy="12" r="9.800" fill="none" stroke="#8a8a8a" strokeWidth="2" strokeDasharray="4.200 3.500" /><circle cx="12" cy="12" r="8.700" fill="#e2e2e2" /><circle cx="12" cy="12" r="4.500" fill="#f5f5f5" stroke="#8a8a8a" /><circle cx="12" cy="12" r="2.200" fill="#fff" stroke="#aaa" /></I>
        <span className="mt-[7px] h-px w-[22px] bg-[#dcdcdc]" />
        <span className="mt-[3px] flex h-8 w-8 shrink-0 items-center justify-center rounded-[4px] border border-[#b5b5b5] bg-[#f8f8f8]">
          <I><path d="M2.500 2.500h19v19h-19z" fill="#e0e0e0" stroke="#8a8a8a" /><rect x="5" y="8.500" width="14" height="7" rx="3.500" fill="#4a96dc" stroke="#3070b0" strokeWidth="0.600" /><circle cx="15.500" cy="12" r="3" fill="#fff" stroke="#888" strokeWidth="0.600" /></I>
        </span>
        <I cls="mt-[6px]"><path d="M1 17L6 1h4.500L16 17h-3.700l-1-3.300H5.500L4.500 17zM6.200 10.500h4L8.200 4z" fill="#484848" fillRule="evenodd" /><path d="M23.500 6.500l-5 7" stroke="#b56c20" strokeWidth="3" /><path d="M18.500 13.500l-4 5" stroke="#ccc" strokeWidth="3" /><path d="M15.500 18q-1 5-7 5 0-4 4-6z" fill="#b83aa0" /></I>
        <I cls="mt-[12px]"><path d="M1 18l4-17 15 3" fill="#5cc4e8" stroke="#888" /><path d="M3.500 4.500h19v17h-19z" fill="#fff" stroke="#777" /><path d="M5 6h16v8H5z" fill="#3ca0dc" /><path d="M5 13q8-3 16 1v6H5z" fill="#e8b860" /><path d="M9 13.500l1 2 2 .5-2 1-1 1.500-1-1.500-2-.5 2-1z" fill="#d02020" /></I>
        <I cls="mt-[11px]"><circle cx="12" cy="12" r="11" fill="#8a8d90" /><circle cx="12" cy="12" r="9.500" fill="#c8cacc" /><circle cx="12" cy="12" r="8.200" fill="#3d4a66" /><path d="M12 6l1.200 4L18 12l-4 1 2 4-3-2-2 3-.5-4-4.500-.5 4-2-1-4 2 2z" fill="#e4e6ea" /><path d="M12 4.500l1 6 5 .5-6 1.500L7 13l4-2.500-3-4 4 3z" fill="#c83a3a" /></I>
        <span className="mt-[10px] ml-[2px] flex h-7 items-end text-[#484848]"><span className="text-[21px] leading-[28px] font-semibold">f</span><span className="text-[12px] leading-[18px] font-medium tracking-[-0.500px]">(x)</span></span>
      </div>
    </div>
  );
}

const MENUS: { t: string; w: number; m: string }[] = [
  { t: "File", w: 24, m: "ml-[8px]" }, { t: "Edit", w: 27, m: "ml-[16px]" }, { t: "View", w: 33, m: "ml-[16px]" }, { t: "Insert", w: 38, m: "ml-[17px]" },
  { t: "Format", w: 50, m: "ml-[17px]" }, { t: "Styles", w: 40, m: "ml-[16px]" }, { t: "Sheet", w: 38, m: "ml-[16px]" }, { t: "Data", w: 31, m: "ml-[16px]" },
  { t: "Tools", w: 36, m: "ml-[16px]" }, { t: "Window", w: 55, m: "ml-[16px]" }, { t: "Help", w: 30, m: "ml-[15px]" },
];
const VS = ({ cls }: { cls: string }) => <span className={`h-[14px] w-px shrink-0 bg-[#d0d0d0] ${cls}`} />;

function CalcWindow() {
  return (
    <section className={`absolute top-[427px] left-[562px] flex h-[501px] w-[882px] flex-col overflow-hidden rounded-t-[8px] bg-[#f6f6f6] text-[14px] leading-none text-[#3d3d3d] shadow-[0_3px_16px_2px_rgba(0,0,0,0.5)] ${UI}`}>
      <div className="grid h-[37px] shrink-0 grid-cols-[1fr_auto_1fr] items-center border-t border-[#55534f] bg-[#3d3b39] pr-[9px] pl-[9px] font-bold text-white">
        <span />
        <Fit w={200}>custdb.csv - LibreOffice Calc</Fit>
        <span className="flex justify-end"><WindowButtons /></span>
      </div>
      <div className="flex h-[25px] shrink-0 items-center">
        <div className="flex h-full w-[846px] items-center border-b border-[#d6d6d6] pt-[2px] text-[#929292]">
          {MENUS.map((m) => <Fit key={m.t} w={m.w} className={m.m}>{m.t}</Fit>)}
        </div>
        <svg className="ml-[14px] h-2 w-2" viewBox="0 0 8 8"><path d="M0.500 0.500l7 7M7.500 0.500l-7 7" stroke="#8a8a8a" strokeWidth="1.200" /></svg>
      </div>
      <ToolbarOne />
      <ToolbarTwo />
      <div className="flex h-[340px] shrink-0">
        <div className="flex w-[835px] shrink-0 flex-col">
          <div className="flex h-[34px] shrink-0 items-center">
            <div className="flex h-[34px] w-[157px] shrink-0 items-center rounded-[4px] border border-[#b9b9b9] bg-white">
              <Fit w={18} className="ml-[10px]">A1</Fit>
              <span className="ml-[94px] flex h-full flex-1 items-center justify-center border-l border-[#b9b9b9]"><Drop /></span>
            </div>
            <span className="ml-1 h-6 w-px bg-[#d6d6d6]" />
            <Fit w={17} className="ml-[7px] text-[18px] font-bold text-[#484848]">fx</Fit>
            <span className="ml-[10px] w-[11px] text-[18px] font-bold text-[#484848]">Σ</span>
            <Arr cls="ml-[7px]" />
            <svg className="ml-[8px] h-[9px] w-[11px]" viewBox="0 0 11 9"><path d="M0 1.500h11M0 7h11" stroke="#555" strokeWidth="2.400" /></svg>
            <span className="ml-[10px] h-6 w-px bg-[#d6d6d6]" />
            <div className="ml-[3px] flex h-6 w-[549px] shrink-0 items-center border border-[#b0b0b0] bg-white pl-[6px]">7</div>
            <span className="ml-1"><Drop /></span>
          </div>
          <div className="flex">
            <Sheet />
            <div className="mt-px h-[268px] w-3 bg-[#d1d1d1]">
              <div className="flex h-1 items-center justify-center bg-[#a8a8a8]"><span className="h-px w-[6px] bg-black" /></div>
              <div className="mt-[6px] ml-[3px] h-[115px] w-[6px] rounded-[2px] bg-[#868686]" />
            </div>
          </div>
          <div className="flex h-3 w-[823px] items-center bg-[#d1d1d1]">
            <div className="ml-1 h-[6px] w-[357px] rounded-[2px] bg-[#868686]" />
            <div className="ml-auto flex h-full w-[5px] items-center justify-center bg-[#a8a8a8]"><span className="h-[6px] w-px bg-black" /></div>
          </div>
          <div className="flex h-[25px] items-center text-[12.500px]">
            <svg className="h-4 w-[143px] shrink-0" viewBox="0 0 143 16" fill="#b0b0b0">
              <path d="M13.500 0v16" stroke="#b0b0b0" /><path d="M23 0v16l-8-8zM47 0v16l-8-8zM64 0v16l8-8zM88 0v16l8-8z" /><path d="M98.500 0v16" stroke="#b0b0b0" />
              <path d="M116 8.500h17M124.500 0v17" stroke="#2d2d2d" strokeWidth="3" />
            </svg>
            <div className="flex h-full w-[63px] items-center border-b-[3px] border-[#999] bg-white pt-[2px] pl-3"><Fit w={37}>custdb</Fit></div>
          </div>
        </div>
        <SideBar />
      </div>
      <footer className="flex h-[21px] shrink-0 items-center border-t border-[#b5b5b5] pt-px text-[12px]">
        <Fit w={66} className="ml-[10px]">Sheet 1 of 1</Fit>
        <VS cls="ml-[24px]" />
        <VS cls="ml-[98px]" />
        <Fit w={42} className="ml-[8px]">Default</Fit>
        <VS cls="ml-[32px]" />
        <Fit w={72} className="ml-[21px]">English (USA)</Fit>
        <VS cls="ml-[18px]" />
        <VS cls="ml-[66px]" />
        <svg className="ml-[7px] h-[10px] w-4 shrink-0" viewBox="0 0 16 10" fill="none" stroke="#777"><path d="M0 0.500h5M0 9.500h5M2.500 0.500v9M9.500 6.500v2.500h6v-2.500" /></svg>
        <VS cls="ml-[6px]" />
        <svg className="ml-[8px] h-[11px] w-[13px] shrink-0" viewBox="0 0 13 11"><path d="M0.500 0.500h12v10h-12z" fill="#e0e0e0" stroke="#888" /><path d="M5 2h3v3h2.500l-4 4-4-4H5z" fill="#555" /></svg>
        <VS cls="ml-[7px]" />
        <VS cls="ml-[28px]" />
        <Fit w={101} className="ml-[21px]">Average: 7; Sum: 7</Fit>
        <VS cls="ml-[18px]" />
        <svg className="ml-[9px] h-3 w-[127px] shrink-0" viewBox="0 0 127 12"><path d="M0 6.500h9M117 6.500h9M121.500 2v9" stroke="#777" /><path d="M15 6.500h97" stroke="#999" /><circle cx="63" cy="6" r="4.500" fill="#f4f4f4" stroke="#888" /></svg>
        <VS cls="ml-[6px]" />
        <Fit w={31} className="ml-2">100%</Fit>
      </footer>
    </section>
  );
}

export default function App() {
  return (
    <main className="relative flex h-[1080px] w-[1920px] flex-col overflow-hidden bg-[#54054f]">
      <Wallpaper />
      <TopBar />
      <div className="relative flex flex-1">
        <Dock />
        <DesktopIcons />
      </div>
      <TableWindow />
      <CalcWindow />
    </main>
  );
}
